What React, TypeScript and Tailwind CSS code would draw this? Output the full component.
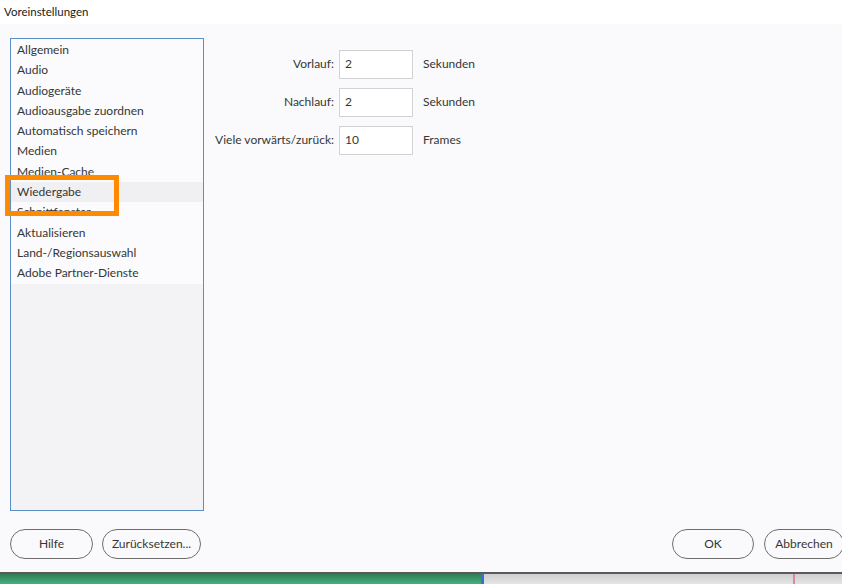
const items = [
  "Allgemein",
  "Audio",
  "Audiogeräte",
  "Audioausgabe zuordnen",
  "Automatisch speichern",
  "Medien",
  "Medien-Cache",
  "Wiedergabe",
  "Schnittfenster",
  "Aktualisieren",
  "Land-/Regionsauswahl",
  "Adobe Partner-Dienste",
];

const fields = [
  { label: "Vorlauf:", value: "2", unit: "Sekunden" },
  { label: "Nachlauf:", value: "2", unit: "Sekunden" },
  { label: "Viele vorwärts/zurück:", value: "10", unit: "Frames" },
];

export default function App() {
  return (
    <div
      className="w-[842px] h-[584px] overflow-hidden flex flex-col bg-[#fafafc] text-[#363636] text-[12px]"
      style={{ fontFamily: "Lato, 'Liberation Sans', sans-serif" }}
    >
      <div className="h-[24px] bg-white flex items-center px-[4px] text-[11.5px] text-[#1a1a1a]">
        Voreinstellungen
      </div>

      <div className="flex-1 relative flex flex-col">
        <div className="flex pt-[14px]">
          <div className="ml-[10px] w-[194px] h-[473px] border border-[#5b8fc9] bg-[#f3f3f5] flex flex-col">
            <div className="bg-[#fbfbfd] flex flex-col pt-[1px]">
              {items.map((it) => (
                <div
                  key={it}
                  className={
                    "h-[20.3px] leading-[20px] px-[6px] whitespace-nowrap " +
                    (it === "Wiedergabe" ? "bg-[#f0f0f2]" : "")
                  }
                >
                  {it}
                </div>
              ))}
            </div>
          </div>

          <div className="flex flex-col gap-[10px] pt-[12px] ml-[6px]">
            {fields.map((f) => (
              <div key={f.label} className="flex items-center h-[28px]">
                <div className="w-[129px] text-right pr-[5px] whitespace-nowrap">{f.label}</div>
                <div className="w-[74px] h-[29px] bg-white border border-[#d2d2d4] flex items-center px-[5px]">
                  {f.value}
                </div>
                <div className="ml-[10px]">{f.unit}</div>
              </div>
            ))}
          </div>
        </div>

        <div className="flex items-start justify-between pt-[18px]">
          <div className="flex gap-[9px] ml-[10px]">
            <button className="w-[83px] h-[30px] rounded-full border border-[#6e6e6e] bg-[#fafafc]">Hilfe</button>
            <button className="w-[99px] h-[30px] rounded-full border border-[#6e6e6e] bg-[#fafafc]">Zurücksetzen...</button>
          </div>
          <div className="flex gap-[10px] -mr-[2px]">
            <button className="w-[82px] h-[30px] rounded-full border border-[#6e6e6e] bg-[#fafafc]">OK</button>
            <button className="w-[80px] h-[30px] rounded-full border border-[#6e6e6e] bg-[#fafafc]">Abbrechen</button>
          </div>
        </div>

        <div className="absolute left-[5px] top-[151px] w-[114px] h-[41px] border-[5px] border-[#ff8a00]"></div>
      </div>

      <div className="h-[12px] border-t-2 border-[#5a5a5a] flex">
        <div className="w-[481px] bg-gradient-to-b from-[#2f7d55] to-[#45b07c]"></div>
        <div className="w-[3px] bg-[#3b6fd0]"></div>
        <div className="w-[309px] bg-gradient-to-b from-[#cfcfcf] to-[#e4e4e4]"></div>
        <div className="w-[2px] bg-[#d98a9a]"></div>
        <div className="flex-1 bg-gradient-to-b from-[#cfcfcf] to-[#e4e4e4]"></div>
      </div>
    </div>
  );
}
